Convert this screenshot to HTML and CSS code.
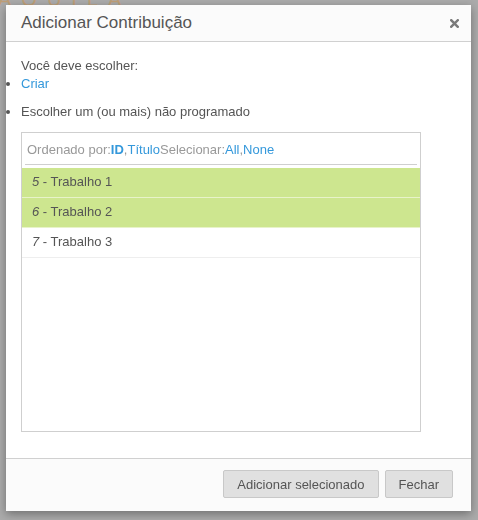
FILE: index.html
```html
<!DOCTYPE html>
<html lang="pt">
<head>
<meta charset="utf-8">
<title>Adicionar Contribuição</title>
<link rel="stylesheet" href="styles.css">
</head>
<body>
<div class="page">
  <div class="brand">AQUILA</div>
</div>
<div class="overlay">
  <div class="dialog">
    <div class="dialog-header">
      <h3 class="dialog-title">Adicionar Contribuição</h3>
      <span class="close" aria-label="Fechar">
        <svg width="9" height="9" viewBox="0 0 9 9"><path d="M1.2 1.2 L7.8 7.8 M7.8 1.2 L1.2 7.8" stroke="#7a7a7a" stroke-width="2.4" stroke-linecap="square"/></svg>
      </span>
    </div>
    <div class="dialog-body">
      <p class="intro">Você deve escolher:</p>
      <ul class="choices">
        <li><a class="link" href="#">Criar</a></li>
        <li class="spaced">Escolher um (ou mais) não programado</li>
      </ul>
      <div class="picker">
        <div class="picker-head">Ordenado por:<a class="link strong" href="#">ID</a>,<a class="link" href="#">Título</a>Selecionar:<a class="link" href="#">All</a>,<a class="link" href="#">None</a></div>
        <div class="rows">
          <div class="row selected"><em>5</em> - Trabalho 1</div>
          <div class="row selected"><em>6</em> - Trabalho 2</div>
          <div class="row"><em>7</em> - Trabalho 3</div>
        </div>
      </div>
    </div>
    <div class="dialog-footer">
      <button class="btn" type="button">Adicionar selecionado</button>
      <button class="btn" type="button">Fechar</button>
    </div>
  </div>
</div>
</body>
</html>
```

FILE: styles.css
```css
html, body {
  margin: 0;
  padding: 0;
}
body {
  background: #ababab;
  font-family: "Liberation Sans", Arial, sans-serif;
  width: 478px;
  height: 520px;
  overflow: hidden;
}
.page {
  height: 520px;
  padding-top: 1px;
}
.brand {
  font-size: 20px;
  line-height: 20px;
  letter-spacing: 10px;
  color: #bf9f78;
  margin: -12px 0 0 -2px;
}
.overlay {
  position: fixed;
  inset: 0;
}
.dialog {
  position: absolute;
  left: 6px;
  top: 5px;
  width: 465px;
  height: 506px;
  background: #fff;
  box-shadow: 0 3px 9px rgba(0, 0, 0, 0.35);
  display: flex;
  flex-direction: column;
}
.dialog-header {
  height: 36px;
  background: #fbfbfb;
  border-bottom: 1px solid #d0d0d0;
  display: flex;
  align-items: center;
  justify-content: space-between;
  padding: 0 12px 0 15px;
}
.dialog-title {
  margin: 0;
  font-size: 17px;
  font-weight: normal;
  color: #555;
  line-height: 20px;
}
.close {
  display: flex;
  width: 9px;
  height: 9px;
  margin-top: 1px;
}
.dialog-body {
  flex: 1;
  padding: 15px 15px 0 15px;
  font-size: 13px;
  color: #555;
  line-height: 18px;
}
.intro {
  margin: 0;
}
.choices {
  margin: 0;
  padding: 0;
}
.choices li {
  list-style: disc outside;
}
.choices li.spaced {
  margin-top: 10px;
}
.link {
  color: #3498db;
  text-decoration: none;
}
.link.strong {
  font-weight: bold;
}
.picker {
  margin-top: 11px;
  width: 398px;
  height: 298px;
  border: 1px solid #cfcfcf;
}
.picker-head {
  margin: 0 3px;
  padding: 9px 2px 7px;
  line-height: 15px;
  color: #999;
  border-bottom: 1px solid #cfcfcf;
}
.rows {
  margin-top: 3px;
}
.row {
  height: 27px;
  line-height: 27px;
  padding: 0 0 2px 10px;
  border-bottom: 1px solid #eee;
  color: #555;
}
.row.selected {
  background: #cde68f;
  border-bottom-color: #e8f3c9;
}
.row em {
  font-style: italic;
}
.dialog-footer {
  height: 53px;
  box-sizing: border-box;
  background: #fbfbfb;
  border-top: 1px solid #d0d0d0;
  display: flex;
  align-items: flex-start;
  justify-content: flex-end;
  gap: 6px;
  padding: 11px 18px 0 15px;
}
.btn {
  font-family: "Liberation Sans", Arial, sans-serif;
  font-size: 13px;
  color: #555;
  background: #e0e0e0;
  border: 1px solid #c8c8c8;
  border-radius: 2px;
  height: 28px;
  padding: 0 13px;
  cursor: pointer;
}
```
